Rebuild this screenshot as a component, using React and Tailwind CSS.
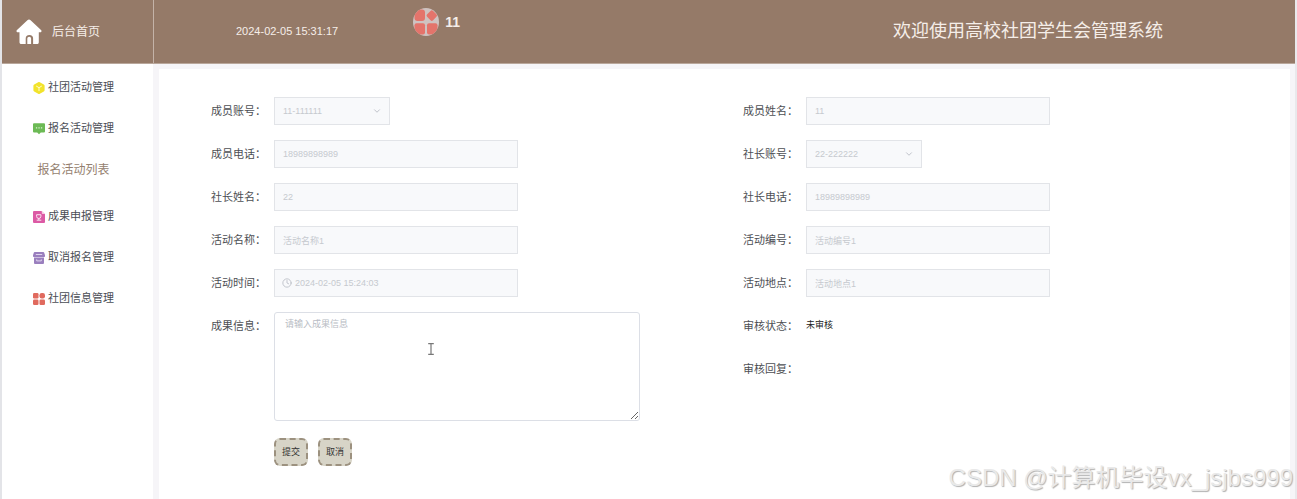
import React from "react";
import { ChevronDown, Clock } from "lucide-react";

const fieldBox =
  "h-7 border border-[#e2e4e8] bg-[#f8f9fb] px-2 text-[9px] text-[#c6c9cf] outline-none disabled:opacity-100";

function HomeIcon() {
  return (
    <svg viewBox="0 0 26 26" className="size-[26px] shrink-0" aria-hidden="true">
      <path
        fill="#fff"
        d="M11.4 1.2a2.3 2.3 0 0 1 3.2 0L25 10.900c1 1 .5 2.400-.9 2.400h-1.300v9.900c0 1.200-.8 1.900-1.900 1.900h-3.800v-5.500a3.700 3.700 0 0 0-7.400 0v5.500H5.400c-1.200 0-1.900-.8-1.900-1.900v-9.900H1.900c-1.400 0-1.900-1.400-.9-2.400z"
      />
      <path fill="#fff" d="M11.300 25.100v-5.400a1.900 1.900 0 0 1 3.800 0v5.400z" />
    </svg>
  );
}

function CubeIcon() {
  return (
    <svg viewBox="0 0 12 12" className="size-3" aria-hidden="true">
      <path fill="#f2e32b" d="M5.200.2a1.600 1.600 0 0 1 1.600 0l4 2.200a1.500 1.500 0 0 1 .8 1.300v4.600a1.500 1.500 0 0 1-.8 1.300l-4 2.200a1.600 1.600 0 0 1-1.600 0l-4-2.200a1.500 1.500 0 0 1-.8-1.300V3.700a1.500 1.500 0 0 1 .8-1.300z" />
      <path fill="none" stroke="#fffbd0" strokeWidth="1" strokeLinecap="round" d="M3.500 4.200 6 5.700l2.500-1.500M6 5.700v3" />
    </svg>
  );
}

function MessageIcon() {
  return (
    <svg viewBox="0 0 12 12" className="size-3" aria-hidden="true">
      <path fill="#6cba55" d="M1 .3h10a1 1 0 0 1 1 1v7.200a1 1 0 0 1-1 1H7.800L6 11.300 4.200 9.500H1a1 1 0 0 1-1-1V1.300a1 1 0 0 1 1-1z" />
      <path stroke="#d8f0d0" strokeWidth="1.200" strokeDasharray="1.300 1.200" d="M2.900 4.900h6.400" />
    </svg>
  );
}

function DocumentIcon() {
  return (
    <svg viewBox="0 0 12 12" className="size-3" aria-hidden="true">
      <path fill="#dc5aa5" d="M1 0h7.500L12 3.200V11a1 1 0 0 1-1 1H1a1 1 0 0 1-1-1V1a1 1 0 0 1 1-1z" />
      <path fill="#f7c9e3" d="M8.800 0 12 3H9.600a.8.8 0 0 1-.8-.8z" />
      <path fill="none" stroke="#fbe3f1" strokeWidth="1" d="M3.700 9.200h4.600M3.600 3.700h4.300v1.600a2.100 2.100 0 0 1-4.300 0zM5.800 7v2" />
    </svg>
  );
}

function ArchiveIcon() {
  return (
    <svg viewBox="0 0 12 12" className="size-3" aria-hidden="true">
      <path fill="#9a7fbe" d="M1.800 0h8.400a1 1 0 0 1 1 .8L12 3.200v1a.7.7 0 0 1-.7.7H.7A.7.7 0 0 1 0 4.200v-1L.8.800a1 1 0 0 1 1-.8zM1 5.400h10V11a1 1 0 0 1-1 1H2a1 1 0 0 1-1-1z" />
      <path fill="none" stroke="#e8dff3" strokeWidth=".9" d="M2.800 2.500h6.400M3.700 7.400v1.500h4.600V7.400" />
    </svg>
  );
}

function GridIcon() {
  return (
    <svg viewBox="0 0 12 12" className="size-3" fill="#e06a5e" aria-hidden="true">
      <rect width="5.500" height="5.500" rx="1.200" />
      <rect x="6.500" width="5.500" height="5.500" rx="2.200" />
      <rect y="6.500" width="5.500" height="5.500" rx="1.200" />
      <rect x="6.500" y="6.500" width="5.500" height="5.500" rx="1.200" />
    </svg>
  );
}

function Avatar() {
  return (
    <svg viewBox="0 0 26 28" className="h-7 w-[26px] shrink-0" aria-hidden="true">
      <defs>
        <clipPath id="avatar-clip">
          <ellipse cx="13" cy="14" rx="13" ry="14" />
        </clipPath>
      </defs>
      <g clipPath="url(#avatar-clip)">
        <rect width="26" height="28" fill="#cfc3c1" />
        <g fill="#e4746b">
          <rect x="1.500" y="1.500" width="10.500" height="11.500" rx="3" />
          <rect x="1.500" y="15.200" width="10.500" height="11.300" rx="2" />
          <rect x="14" y="15.200" width="10.500" height="11.300" rx="2" />
          <rect x="14.600" y="3.400" width="8.400" height="8.400" rx="1.800" transform="rotate(45 18.800 7.600)" />
        </g>
      </g>
    </svg>
  );
}

const menu = [
  { label: "社团活动管理", Icon: CubeIcon },
  { label: "报名活动管理", Icon: MessageIcon, children: ["报名活动列表"] },
  { label: "成果申报管理", Icon: DocumentIcon },
  { label: "取消报名管理", Icon: ArchiveIcon },
  { label: "社团信息管理", Icon: GridIcon },
];

function Row({ id, label, tall, children }) {
  return (
    <div className={tall ? "flex items-start" : "flex h-7 items-center"}>
      <label htmlFor={id} className="w-[63px] shrink-0 text-[11px] leading-7 text-[#4d4f54]">
        {label}：
      </label>
      {children}
    </div>
  );
}

function TextRow({ id, label, value, clock }) {
  return (
    <Row id={id} label={label}>
      <div className="relative w-[244px]">
        <input id={id} type="text" disabled defaultValue={value} className={`${fieldBox} w-full ${clock ? "pl-5" : ""}`} />
        {clock && <Clock className="absolute left-2 top-[9px] size-[10px] text-[#b8bcc4]" />}
      </div>
    </Row>
  );
}

function SelectRow({ id, label, value }) {
  return (
    <Row id={id} label={label}>
      <div className="relative w-[116px]">
        <select id={id} disabled defaultValue={value} className={`${fieldBox} w-full appearance-none`}>
          <option value={value}>{value}</option>
        </select>
        <ChevronDown className="absolute right-2 top-[9px] size-[10px] text-[#b4b8c0]" />
      </div>
    </Row>
  );
}

function ActionButton({ type, children }) {
  return (
    <button
      type={type}
      className="h-7 w-[34px] rounded-md border-2 border-dashed border-[#9c917f] bg-[#d7d4c7] pt-[2px] text-[9px] text-[#333]"
    >
      {children}
    </button>
  );
}

export default function App() {
  return (
    <div className="relative flex min-h-screen flex-col border-x-2 border-l-[#e3e4e8] border-r-[#e9e9ec] bg-white font-['Liberation_Sans','Noto_Sans_CJK_SC',sans-serif]">
      <header className="flex h-16 items-center border-b border-[#b9a79b] bg-[#957a68] text-[#f5eee9]">
        <a href="#home" className="flex h-full w-[152px] shrink-0 items-center gap-[10px] border-r border-[#c4b3a8] pl-[14px] text-[12px]">
          <HomeIcon />
          后台首页
        </a>
        <time className="ml-[82px] shrink-0 text-[11px]">2024-02-05 15:31:17</time>
        <div className="ml-[75px] flex items-center gap-[6px] self-start pt-2 text-[14px] font-bold">
          <Avatar />
          <span>11</span>
        </div>
        <h1 className="ml-auto mr-[132px] text-[18px]">欢迎使用高校社团学生会管理系统</h1>
      </header>

      <div className="flex grow">
        <nav className="w-[151px] shrink-0 pt-[3px] text-[11px] text-[#4a4d55]">
          <ul>
            {menu.map(({ label, Icon, children }) => (
              <li key={label}>
                <a href="#menu" className="flex h-[41px] items-center gap-[3px] pl-[31px]">
                  <Icon />
                  {label}
                </a>
                {children?.map((child) => (
                  <a key={child} href="#list" className="mb-[5px] flex h-[42px] items-center justify-center pr-2 text-[12px] text-[#957f70]">
                    {child}
                  </a>
                ))}
              </li>
            ))}
          </ul>
        </nav>

        <main className="grow border-l-[6px] border-r-[5px] border-t-[5px] border-[#f6f5f8]">
          <form className="grid grid-cols-2 pl-[52px] pr-[15px] pt-7">
            <div className="flex flex-col gap-[15px]">
              <SelectRow id="member-account" label="成员账号" value="11-111111" />
              <TextRow id="member-phone" label="成员电话" value="18989898989" />
              <TextRow id="leader-name" label="社长姓名" value="22" />
              <TextRow id="activity-name" label="活动名称" value="活动名称1" />
              <TextRow id="activity-time" label="活动时间" value="2024-02-05 15:24:03" clock />
              <Row id="result" label="成果信息" tall>
                <div className="relative w-[366px]">
                  <textarea
                    id="result"
                    placeholder="请输入成果信息"
                    className="block h-[109px] w-full resize rounded-[3px] border border-[#dcdfe6] bg-white px-[10px] py-[4px] text-[9px] leading-[14px] text-[#606266] outline-none placeholder:text-[#b8bcc4]"
                  />
                  <svg viewBox="0 0 6 12" className="absolute left-[154px] top-[31px] h-3 w-[6px]" fill="none" stroke="#777" aria-hidden="true">
                    <path strokeWidth="1.200" d="M.2.700h5.600M.2 11.300h5.600M3 .7v10.600" />
                  </svg>
                </div>
              </Row>
              <div className="mt-[2px] flex gap-[10px] pl-[63px]">
                <ActionButton type="submit">提交</ActionButton>
                <ActionButton type="reset">取消</ActionButton>
              </div>
            </div>
            <div className="flex flex-col gap-[15px]">
              <TextRow id="member-name" label="成员姓名" value="11" />
              <SelectRow id="leader-account" label="社长账号" value="22-222222" />
              <TextRow id="leader-phone" label="社长电话" value="18989898989" />
              <TextRow id="activity-number" label="活动编号" value="活动编号1" />
              <TextRow id="activity-place" label="活动地点" value="活动地点1" />
              <Row id="review-status" label="审核状态">
                <output id="review-status" className="text-[9px] text-[#222]">未审核</output>
              </Row>
              <Row id="review-reply" label="审核回复">
                <output id="review-reply" className="text-[9px] text-[#222]" />
              </Row>
            </div>
          </form>
        </main>
      </div>

      <p className="pointer-events-none absolute bottom-[5px] right-[2px] text-[24px] leading-8 text-[#e9e9e9] [text-shadow:1px_1px_1px_#b0b0b0]">
        CSDN @计算机毕设vx_jsjbs999
      </p>
    </div>
  );
}
